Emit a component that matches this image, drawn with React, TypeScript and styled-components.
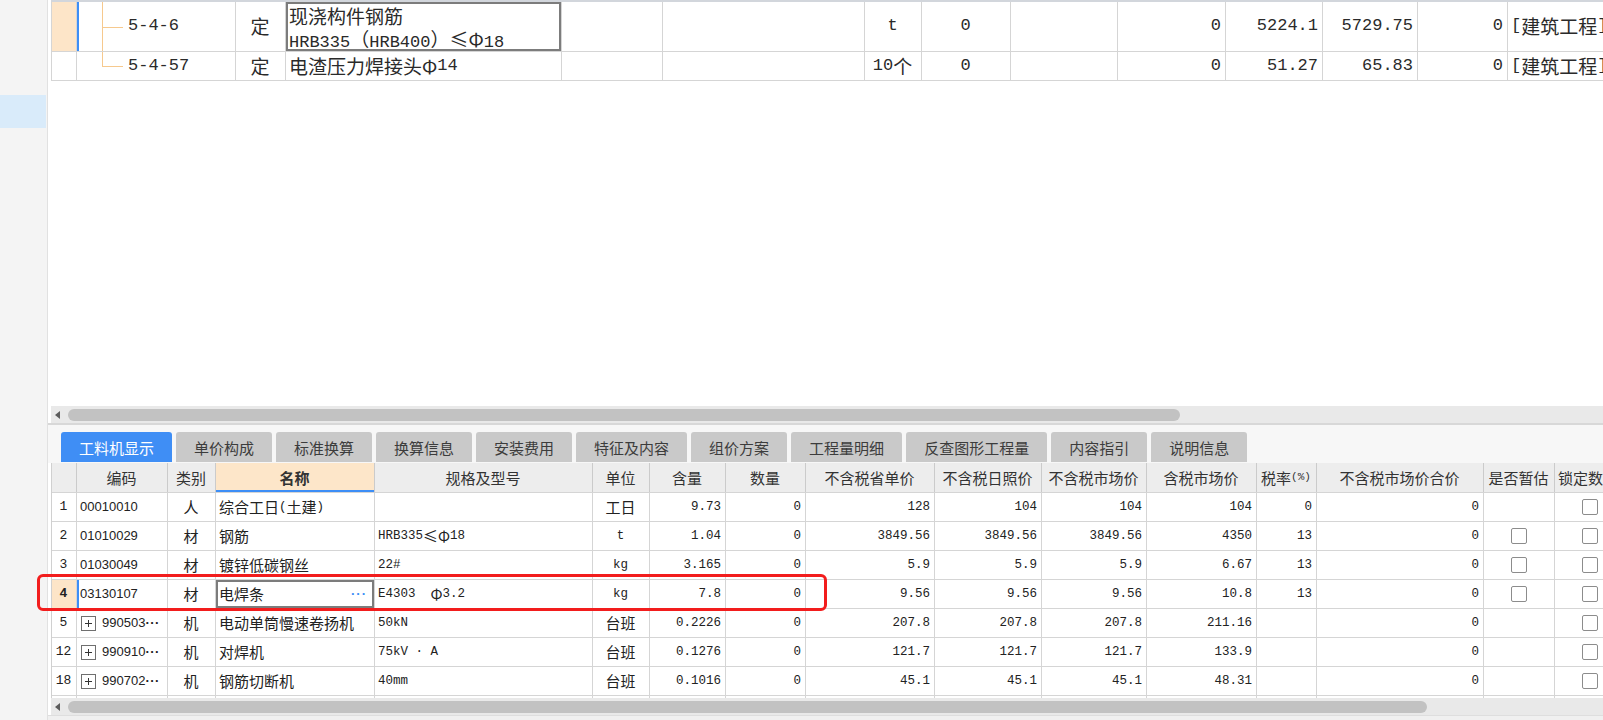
import React from "react";
import styled, { createGlobalStyle } from "styled-components";

type Align = "left" | "center" | "right";

const GlobalStyle = createGlobalStyle`
  html, body {
    margin: 0;
    padding: 0;
    background: #fff;
  }
  body {
    font-family: "Noto Sans CJK SC", "Liberation Sans", sans-serif;
    color: #1e1e1e;
  }
  * {
    box-sizing: border-box;
  }
`;

const CJK_RE = /([\u2E80-\u9FFF\uFF00-\uFFEF\u3000-\u303F\u2264\u03A6]+)/;

const Cjk = styled.span`
  font-family: "Noto Sans CJK SC", sans-serif;
`;

// splits a string so chinese runs get the CJK font, latin runs keep the mono one
const Txt = ({ children }: { children: string }) => (
  <>
    {children
      .split(CJK_RE)
      .map((part, i) =>
        CJK_RE.test(part) ? <Cjk key={i}>{part}</Cjk> : part
      )}
  </>
);

const Screen = styled.div`
  position: relative;
  width: 1603px;
  height: 720px;
  display: flex;
  overflow: hidden;
  background: #fff;
`;

const Sidebar = styled.aside`
  width: 48px;
  flex: none;
  background: #f4f4f4;
  border-right: 1px solid #e1e1e1;
  padding-top: 95px;
`;

const SideItem = styled.div`
  width: 46px;
  height: 33px;
  background: #d9ebfa;
`;

const Main = styled.main`
  flex: 1;
  min-width: 0;
  display: flex;
  flex-direction: column;
`;

const TopPane = styled.section`
  height: 406px;
  padding-left: 3px;
  overflow: hidden;
  background: #fff;
`;

const Row = styled.div<{ $h: number; $bg?: string }>`
  display: flex;
  height: ${(p) => p.$h}px;
  border-bottom: 1px solid #d5d5d5;
  background: ${(p) => p.$bg ?? "transparent"};
`;

const Cell = styled.div<{ $w: number; $align?: Align; $bg?: string; $sel?: boolean; $mark?: boolean }>`
  flex: none;
  width: ${(p) => p.$w}px;
  height: 100%;
  display: flex;
  align-items: center;
  justify-content: ${(p) =>
    p.$align === "right" ? "flex-end" : p.$align === "center" ? "center" : "flex-start"};
  padding: 0 4px 0 3px;
  border-right: 1px solid #d5d5d5;
  background: ${(p) => p.$bg ?? "transparent"};
  box-shadow: ${(p) =>
    p.$sel ? "inset 0 0 0 2px #7c7c7c" : p.$mark ? "inset 2px 0 0 #3d8ef6" : "none"};
  white-space: pre;
  overflow: hidden;
`;

const TopGrid = styled.div`
  border-top: 2px solid #d2d6dc;
  border-left: 1px solid #d5d5d5;
  font-family: "Liberation Mono", "Noto Sans CJK SC", monospace;
  font-size: 17px;
  line-height: 1.2;
  color: #2a2a2a;

  ${Cjk} {
    font-size: 19px;
  }
`;

const TreeCell = styled(Cell)<{ $last?: boolean }>`
  position: relative;
  padding-left: 51px;

  &::before {
    content: "";
    position: absolute;
    left: 25px;
    top: 0;
    bottom: ${(p) => (p.$last ? "50%" : "0")};
    border-left: 1px solid #f6c98e;
  }
  &::after {
    content: "";
    position: absolute;
    left: 25px;
    top: 50%;
    width: 21px;
    border-top: 1px solid #f6c98e;
  }
`;

const Lines = styled.div`
  display: flex;
  flex-direction: column;
`;

const Line = styled.div`
  height: 23px;
  line-height: 23px;
`;

const HScroll = styled.div`
  height: 17px;
  margin-left: 3px;
  display: flex;
  align-items: center;
  gap: 8px;
  padding-left: 4px;
  background: #e9e9e9;
`;

const ArrowLeft = styled.span`
  width: 0;
  height: 0;
  border-top: 4px solid transparent;
  border-bottom: 4px solid transparent;
  border-right: 5px solid #5c5c5c;
`;

const Thumb = styled.div<{ $w: number }>`
  width: ${(p) => p.$w}px;
  height: 12px;
  border-radius: 6px;
  background: #c2c2c2;
`;

const Divider = styled.div`
  height: 2px;
  background: #d8d8d8;
`;

const TabStrip = styled.nav`
  display: flex;
  gap: 4px;
  padding: 7px 0 1px 13px;
  background: #f7f7f7;
`;

const Tab = styled.div<{ $active?: boolean }>`
  height: 30px;
  padding: 0 18px;
  display: flex;
  align-items: center;
  border-radius: 3px 3px 0 0;
  background: ${(p) => (p.$active ? "#3f8ef5" : "#c9c9c9")};
  color: ${(p) => (p.$active ? "#fff" : "#3c3c3c")};
  font-size: 15px;
  white-space: nowrap;
`;

const BottomGrid = styled.div`
  height: 235px;
  overflow: hidden;
  margin-left: 3px;
  border-left: 1px solid #d0d0d0;
  font-family: "Liberation Mono", "Noto Sans CJK SC", monospace;
  font-size: 12.5px;
  line-height: 1.2;
  color: #222;

  ${Cjk} {
    font-size: 15px;
  }
`;

const HeadCell = styled(Cell)<{ $strong?: boolean }>`
  background: ${(p) => (p.$strong ? "#fde6c9" : "#ededed")};
  border-right-color: #cbcbcb;
  box-shadow: ${(p) => (p.$strong ? "inset 0 -2px 0 #3d8ef6" : "none")};
  color: #333;
  font-weight: ${(p) => (p.$strong ? 700 : 400)};
`;

const Small = styled.span`
  font-size: 11px;
`;

const RowNo = styled.span<{ $bold?: boolean }>`
  font-size: 13px;
  font-weight: ${(p) => (p.$bold ? 700 : 400)};
`;

const Code = styled.span`
  font-family: "Liberation Sans", sans-serif;
  font-size: 13px;
`;

const Dots = styled.span`
  font-weight: 700;
  letter-spacing: 0.5px;
`;

const Expand = styled.span`
  position: relative;
  flex: none;
  width: 15px;
  height: 15px;
  margin: 0 6px 0 1px;
  border: 1px solid #6f6f6f;
  background: #fff;

  &::before,
  &::after {
    content: "";
    position: absolute;
    background: #333;
  }
  &::before {
    left: 3px;
    right: 3px;
    top: 6px;
    height: 1px;
  }
  &::after {
    top: 3px;
    bottom: 3px;
    left: 6px;
    width: 1px;
  }
`;

const More = styled.span`
  margin-left: auto;
  margin-right: 3px;
  color: #3d8ef6;
  font-family: "Liberation Sans", sans-serif;
  font-size: 13px;
  font-weight: 700;
  letter-spacing: 1px;
`;

const Check = styled.span`
  width: 16px;
  height: 16px;
  border: 1px solid #8c8c8c;
  border-radius: 2px;
  background: #fff;
`;

const Footer = styled.footer`
  height: 5px;
  background: #f0f0f0;
  border-top: 1px solid #dedede;
`;

const Highlight = styled.div`
  position: absolute;
  left: 37px;
  top: 574px;
  width: 790px;
  height: 37px;
  border: 3px solid #f21d1d;
  border-radius: 6px;
  pointer-events: none;
`;

const topCols = [25, 159, 50, 276, 101, 202, 57, 89, 107, 108, 97, 95, 90, 140];
const bottomCols = [25, 91, 48, 159, 218, 57, 76, 80, 129, 107, 105, 110, 60, 167, 71, 72];

const tabs = [
  "工料机显示",
  "单价构成",
  "标准换算",
  "换算信息",
  "安装费用",
  "特征及内容",
  "组价方案",
  "工程量明细",
  "反查图形工程量",
  "内容指引",
  "说明信息",
];

const heads: { label: string; align?: Align; strong?: boolean }[] = [
  { label: "" },
  { label: "编码", align: "center" },
  { label: "类别", align: "center" },
  { label: "名称", align: "center", strong: true },
  { label: "规格及型号", align: "center" },
  { label: "单位", align: "center" },
  { label: "含量", align: "center" },
  { label: "数量", align: "center" },
  { label: "不含税省单价", align: "center" },
  { label: "不含税日照价", align: "center" },
  { label: "不含税市场价", align: "center" },
  { label: "含税市场价", align: "center" },
  { label: "税率(%)", align: "center" },
  { label: "不含税市场价合价", align: "center" },
  { label: "是否暂估", align: "center" },
  { label: "锁定数量", align: "left" },
];

type MatRow = {
  no: string;
  code: string;
  expand?: boolean;
  kind: string;
  name: string;
  spec: string;
  unit: string;
  amount: string;
  qty: string;
  prices: string[];
  tax: string;
  total: string;
  est: boolean;
  lock: boolean;
  current?: boolean;
};

const materials: MatRow[] = [
  { no: "1", code: "00010010", kind: "人", name: "综合工日(土建)", spec: "", unit: "工日", amount: "9.73", qty: "0", prices: ["128", "104", "104", "104"], tax: "0", total: "0", est: false, lock: true },
  { no: "2", code: "01010029", kind: "材", name: "钢筋", spec: "HRB335≤Φ18", unit: "t", amount: "1.04", qty: "0", prices: ["3849.56", "3849.56", "3849.56", "4350"], tax: "13", total: "0", est: true, lock: true },
  { no: "3", code: "01030049", kind: "材", name: "镀锌低碳钢丝", spec: "22#", unit: "kg", amount: "3.165", qty: "0", prices: ["5.9", "5.9", "5.9", "6.67"], tax: "13", total: "0", est: true, lock: true },
  { no: "4", code: "03130107", kind: "材", name: "电焊条", spec: "E4303  Φ3.2", unit: "kg", amount: "7.8", qty: "0", prices: ["9.56", "9.56", "9.56", "10.8"], tax: "13", total: "0", est: true, lock: true, current: true },
  { no: "5", code: "990503", expand: true, kind: "机", name: "电动单筒慢速卷扬机", spec: "50kN", unit: "台班", amount: "0.2226", qty: "0", prices: ["207.8", "207.8", "207.8", "211.16"], tax: "", total: "0", est: false, lock: true },
  { no: "12", code: "990910", expand: true, kind: "机", name: "对焊机", spec: "75kV · A", unit: "台班", amount: "0.1276", qty: "0", prices: ["121.7", "121.7", "121.7", "133.9"], tax: "", total: "0", est: false, lock: true },
  { no: "18", code: "990702", expand: true, kind: "机", name: "钢筋切断机", spec: "40mm", unit: "台班", amount: "0.1016", qty: "0", prices: ["45.1", "45.1", "45.1", "48.31"], tax: "", total: "0", est: false, lock: true },
  { no: "", code: "", kind: "", name: "", spec: "", unit: "", amount: "", qty: "", prices: ["", "", "", ""], tax: "", total: "", est: false, lock: false },
];

const QuotaRows = () => (
  <TopGrid>
    <Row $h={50}>
      <Cell $w={topCols[0]} $bg="#fde5c8" />
      <TreeCell $w={topCols[1]} $mark>5-4-6</TreeCell>
      <Cell $w={topCols[2]} $align="center"><Txt>定</Txt></Cell>
      <Cell $w={topCols[3]} $sel>
        <Lines>
          <Line><Txt>现浇构件钢筋</Txt></Line>
          <Line><Txt>HRB335（HRB400）≤Φ18</Txt></Line>
        </Lines>
      </Cell>
      <Cell $w={topCols[4]} />
      <Cell $w={topCols[5]} />
      <Cell $w={topCols[6]} $align="center">t</Cell>
      <Cell $w={topCols[7]} $align="center">0</Cell>
      <Cell $w={topCols[8]} />
      <Cell $w={topCols[9]} $align="right">0</Cell>
      <Cell $w={topCols[10]} $align="right">5224.1</Cell>
      <Cell $w={topCols[11]} $align="right">5729.75</Cell>
      <Cell $w={topCols[12]} $align="right">0</Cell>
      <Cell $w={topCols[13]}><Txt>[建筑工程]</Txt></Cell>
    </Row>
    <Row $h={29}>
      <Cell $w={topCols[0]} />
      <TreeCell $w={topCols[1]} $last>5-4-57</TreeCell>
      <Cell $w={topCols[2]} $align="center"><Txt>定</Txt></Cell>
      <Cell $w={topCols[3]}><Txt>电渣压力焊接头Φ14</Txt></Cell>
      <Cell $w={topCols[4]} />
      <Cell $w={topCols[5]} />
      <Cell $w={topCols[6]} $align="center"><Txt>10个</Txt></Cell>
      <Cell $w={topCols[7]} $align="center">0</Cell>
      <Cell $w={topCols[8]} />
      <Cell $w={topCols[9]} $align="right">0</Cell>
      <Cell $w={topCols[10]} $align="right">51.27</Cell>
      <Cell $w={topCols[11]} $align="right">65.83</Cell>
      <Cell $w={topCols[12]} $align="right">0</Cell>
      <Cell $w={topCols[13]}><Txt>[建筑工程]</Txt></Cell>
    </Row>
  </TopGrid>
);

const MaterialRow = ({ r }: { r: MatRow }) => (
  <Row $h={29}>
    <Cell $w={bottomCols[0]} $align="center" $bg={r.current ? "#fde5c8" : undefined}>
      <RowNo $bold={r.current}>{r.no}</RowNo>
    </Cell>
    <Cell $w={bottomCols[1]} $mark={r.current}>
      {r.expand && <Expand />}
      <Code>
        {r.code}
        {r.expand && <Dots>···</Dots>}
      </Code>
    </Cell>
    <Cell $w={bottomCols[2]} $align="center"><Txt>{r.kind}</Txt></Cell>
    <Cell $w={bottomCols[3]} $sel={r.current}>
      <Txt>{r.name}</Txt>
      {r.current && <More>···</More>}
    </Cell>
    <Cell $w={bottomCols[4]}><Txt>{r.spec}</Txt></Cell>
    <Cell $w={bottomCols[5]} $align="center"><Txt>{r.unit}</Txt></Cell>
    <Cell $w={bottomCols[6]} $align="right">{r.amount}</Cell>
    <Cell $w={bottomCols[7]} $align="right">{r.qty}</Cell>
    {r.prices.map((p, i) => (
      <Cell key={i} $w={bottomCols[8 + i]} $align="right">{p}</Cell>
    ))}
    <Cell $w={bottomCols[12]} $align="right">{r.tax}</Cell>
    <Cell $w={bottomCols[13]} $align="right">{r.total}</Cell>
    <Cell $w={bottomCols[14]} $align="center">{r.est && <Check />}</Cell>
    <Cell $w={bottomCols[15]} $align="center">{r.lock && <Check />}</Cell>
  </Row>
);

export default function App() {
  return (
    <>
      <GlobalStyle />
      <Screen>
        <Sidebar>
          <SideItem />
        </Sidebar>
        <Main>
          <TopPane>
            <QuotaRows />
          </TopPane>
          <HScroll>
            <ArrowLeft />
            <Thumb $w={1112} />
          </HScroll>
          <Divider />
          <TabStrip>
            {tabs.map((t, i) => (
              <Tab key={t} $active={i === 0}>{t}</Tab>
            ))}
          </TabStrip>
          <BottomGrid>
            <Row $h={30}>
              {heads.map((h, i) => (
                <HeadCell key={i} $w={bottomCols[i]} $align={h.align} $strong={h.strong}>
                  {h.label === "税率(%)" ? (
                    <>
                      <Txt>税率</Txt>
                      <Small>(%)</Small>
                    </>
                  ) : (
                    <Txt>{h.label}</Txt>
                  )}
                </HeadCell>
              ))}
            </Row>
            {materials.map((r, i) => (
              <MaterialRow key={i} r={r} />
            ))}
          </BottomGrid>
          <HScroll>
            <ArrowLeft />
            <Thumb $w={1359} />
          </HScroll>
          <Footer />
        </Main>
        <Highlight />
      </Screen>
    </>
  );
}
